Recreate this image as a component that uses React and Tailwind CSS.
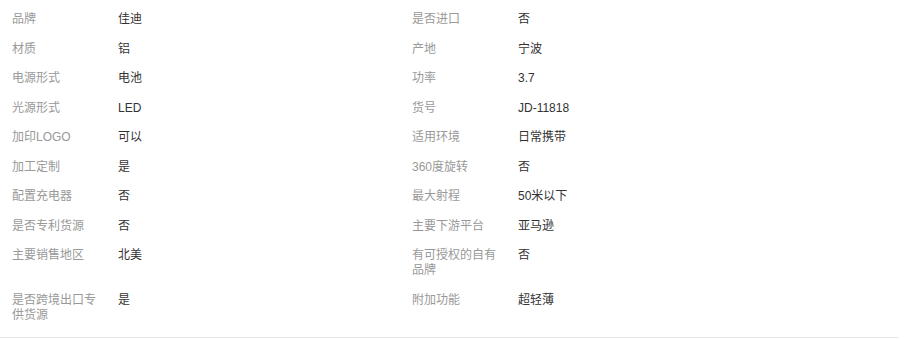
const rows = [
  ["品牌", "佳迪", "是否进口", "否"],
  ["材质", "铝", "产地", "宁波"],
  ["电源形式", "电池", "功率", "3.7"],
  ["光源形式", "LED", "货号", "JD-11818"],
  ["加印LOGO", "可以", "适用环境", "日常携带"],
  ["加工定制", "是", "360度旋转", "否"],
  ["配置充电器", "否", "最大射程", "50米以下"],
  ["是否专利货源", "否", "主要下游平台", "亚马逊"],
  ["主要销售地区", "北美", "有可授权的自有品牌", "否"],
  ["是否跨境出口专供货源", "是", "附加功能", "超轻薄"],
];

function Cell({ label, value }) {
  return (
    <div className="flex w-[400px] py-[7.25px] pl-[12px]">
      <div className="w-[90px] shrink-0 text-[#999999] break-all">{label}</div>
      <div className="ml-[16px] text-[#333333]">{value}</div>
    </div>
  );
}

export default function App() {
  return (
    <div
      className="w-[898px] bg-white border-b border-[#e5e5e5] pt-[5px] pb-[7px] text-[12px] leading-[15px]"
      style={{ fontFamily: '"Liberation Sans", "Noto Sans CJK SC", sans-serif' }}
    >
      {rows.map((r, i) => (
        <div key={i} className="flex">
          <Cell label={r[0]} value={r[1]} />
          <Cell label={r[2]} value={r[3]} />
        </div>
      ))}
    </div>
  );
}
